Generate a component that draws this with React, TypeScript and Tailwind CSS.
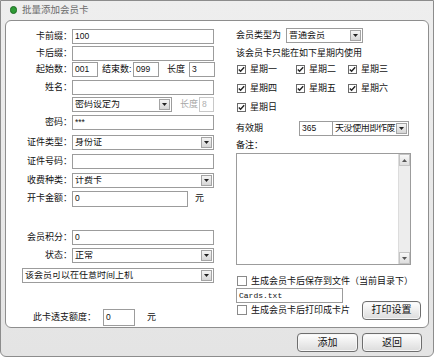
import type { ReactNode } from 'react';
import { clsx } from 'clsx';

const Arrow = ({ dir = 'down' }: { dir?: 'down' | 'up' }) => (
    <svg width="5" height="3" viewBox="0 0 5 3">
        {dir === 'down' ? <path d="M0 0H5L2.5 3Z" fill="#222" /> : <path d="M0 3H5L2.5 0Z" fill="#555" />}
    </svg>
);

const Input = ({ className, value, disabled, mono }: { className: string; value?: string; disabled?: boolean; mono?: boolean }) => (
    <div
        className={clsx(
            'h-[15px] bg-white border flex items-center pl-[2px] shrink-0 text-[8.5px] leading-none',
            disabled ? 'border-[#c8c8c8] text-[#b0b0b0]' : 'border-[#9c9c9c] text-[#111]',
            mono && "[font-family:'Liberation_Mono',monospace] text-[8px]",
            className
        )}
    >
        {value}
    </div>
);

const Select = ({ className, value, tight }: { className: string; value: string; tight?: boolean }) => (
    <div className={clsx('h-[15px] bg-white border border-[#9c9c9c] flex items-center shrink-0 overflow-hidden', className)}>
        <span className={clsx('pl-[2px] flex-1 whitespace-nowrap overflow-hidden', tight && 'tracking-[-0.4px] pl-[1px]')}>{value}</span>
        <div className="w-[11px] h-[11px] mr-[1px] shrink-0 border border-[#a4a4a4] bg-gradient-to-b from-[#f4f4f4] to-[#d6d6d6] flex items-center justify-center">
            <Arrow />
        </div>
    </div>
);

const Check = ({ label, className }: { label: string; className?: string }) => (
    <div className={clsx('flex items-center h-[12px]', className)}>
        <div className="w-[9px] h-[9px] border border-[#6a6a6a] bg-white flex items-center justify-center shrink-0">
            <svg width="7" height="7" viewBox="0 0 7 7">
                <path d="M0.8 3.4L2.6 5.3L6.2 1.2" stroke="#222" strokeWidth="1.4" fill="none" />
            </svg>
        </div>
        <span className="ml-[4px] whitespace-nowrap">{label}</span>
    </div>
);

const Box = ({ label, className }: { label: string; className?: string }) => (
    <div className={clsx('flex items-center h-[12px]', className)}>
        <div className="w-[10px] h-[10px] border border-[#8a8a8a] bg-white shrink-0" />
        <span className="ml-[4px] whitespace-nowrap">{label}</span>
    </div>
);

const Row = ({ label, mt, children }: { label?: string; mt: string; children: ReactNode }) => (
    <div className={clsx('flex items-center h-[15px]', mt)}>
        <div className="w-[66px] shrink-0 text-right whitespace-nowrap">{label}</div>
        {children}
    </div>
);

const Button = ({ label, className }: { label: string; className: string }) => (
    <div
        className={clsx(
            'h-[19px] rounded-[4px] border border-[#6e6e6e] bg-gradient-to-b from-[#ffffff] to-[#dcdcdc] flex items-center justify-center text-[10px] shadow-[inset_0_0_0_1px_#f6f6f6]',
            className
        )}
    >
        {label}
    </div>
);

export default function App() {
    return (
        <div className="w-[434px] h-[360px] bg-white overflow-hidden [font-family:'Liberation_Sans','Noto_Sans_CJK_SC',sans-serif] text-[9px] text-[#111] leading-none">
            <div className="h-[357px] border border-[#8c8c8c] rounded-b-[6px] bg-gradient-to-b from-[#eeeeee] to-[#e4e4e4] flex flex-col">
                {/* title */}
                <div className="h-[18px] flex items-center pl-[9px] shrink-0">
                    <div className="w-[7px] h-[8px] rounded-full bg-[#2e9b36] border border-[#1d6b22]" />
                    <span className="ml-[5px] text-[9.5px] text-[#6b6b6b]">批量添加会员卡</span>
                </div>

                <div className="ml-[4px] mt-[1px] w-[424px] h-[308px] rounded-[6px] border border-[#8e8e8e] bg-white flex shrink-0">
                    {/* left */}
                    <div className="w-[216px] flex flex-col shrink-0">
                        <Row label="卡前缀：" mt="mt-[8px]">
                            <Input className="w-[142px]" value="100" />
                        </Row>
                        <Row label="卡后缀：" mt="mt-[2px]">
                            <Input className="w-[142px]" />
                        </Row>
                        <Row label="起始数：" mt="mt-[1px]">
                            <Input className="w-[26px]" value="001" />
                            <span className="ml-[4px] w-[31px] whitespace-nowrap">结束数:</span>
                            <Input className="w-[26px]" value="099" />
                            <span className="ml-[8px] w-[22px]">长度</span>
                            <Input className="w-[26px]" value="3" />
                        </Row>
                        <Row label="姓名：" mt="mt-[3px]">
                            <Input className="w-[142px]" />
                        </Row>
                        <Row mt="mt-[2px]">
                            <Select className="w-[100px]" value="密码设定为" />
                            <span className="ml-[8px] w-[19px] text-[#a8a8a8]">长度</span>
                            <Input className="w-[15px]" value="8" disabled />
                        </Row>
                        <Row label="密码：" mt="mt-[3px]">
                            <Input className="w-[142px]" value="***" />
                        </Row>
                        <Row label="证件类型：" mt="mt-[5px]">
                            <Select className="w-[142px]" value="身份证" />
                        </Row>
                        <Row label="证件号码：" mt="mt-[4px]">
                            <Input className="w-[142px]" />
                        </Row>
                        <Row label="收费种类：" mt="mt-[4px]">
                            <Select className="w-[142px]" value="计费卡" />
                        </Row>
                        <Row label="开卡金额：" mt="mt-[3px]">
                            <Input className="w-[116px] h-[16px]" value="0" />
                            <span className="ml-[7px]">元</span>
                        </Row>
                        <Row label="会员积分：" mt="mt-[24px]">
                            <Input className="w-[142px]" value="0" />
                        </Row>
                        <Row label="状态：" mt="mt-[3px]">
                            <Select className="w-[142px]" value="正常" />
                        </Row>
                        <div className="flex items-center h-[15px] mt-[5px] pl-[16px]">
                            <Select className="w-[192px]" value="该会员可以在任意时间上机" />
                        </div>
                        <div className="flex items-center h-[16px] mt-[26px] pl-[27px]">
                            <span className="w-[70px] whitespace-nowrap">此卡透支额度：</span>
                            <Input className="w-[32px] h-[17px]" value="0" />
                            <span className="ml-[12px]">元</span>
                        </div>
                    </div>

                    {/* right */}
                    <div className="ml-[14px] w-[185px] flex flex-col shrink-0">
                        <div className="flex items-center h-[15px] mt-[7px]">
                            <span className="w-[50px] whitespace-nowrap">会员类型为</span>
                            <Select className="w-[77px]" value="普通会员" />
                        </div>
                        <div className="h-[12px] mt-[4px] flex items-center whitespace-nowrap">该会员卡只能在如下星期内使用</div>
                        <div className="flex mt-[4px]">
                            <Check className="w-[60px] pl-[1px]" label="星期一" />
                            <Check className="w-[52px]" label="星期二" />
                            <Check label="星期三" />
                        </div>
                        <div className="flex mt-[7px]">
                            <Check className="w-[60px] pl-[1px]" label="星期四" />
                            <Check className="w-[52px]" label="星期五" />
                            <Check label="星期六" />
                        </div>
                        <div className="flex mt-[7px]">
                            <Check className="pl-[1px]" label="星期日" />
                        </div>
                        <div className="flex items-center h-[15px] mt-[8px]">
                            <span className="w-[63px]">有效期</span>
                            <Input className="w-[34px]" value="365" />
                            <Select className="w-[77px] -ml-[1px]" value="天没使用即作废" tight />
                        </div>
                        <div className="h-[12px] mt-[3px] flex items-center">备注：</div>
                        <div className="mt-[2px] w-[175px] h-[112px] border border-[#9c9c9c] bg-white flex justify-end">
                            <div className="w-[12px] h-full bg-[#ededed] border-l border-[#dcdcdc] flex flex-col justify-between">
                                <div className="h-[12px] border border-[#c4c4c4] bg-gradient-to-b from-[#f8f8f8] to-[#dedede] flex items-center justify-center">
                                    <Arrow dir="up" />
                                </div>
                                <div className="h-[12px] border border-[#c4c4c4] bg-gradient-to-b from-[#f8f8f8] to-[#dedede] flex items-center justify-center">
                                    <svg width="5" height="3" viewBox="0 0 5 3">
                                        <path d="M0 0H5L2.5 3Z" fill="#555" />
                                    </svg>
                                </div>
                            </div>
                        </div>
                        <Box className="mt-[10px] pl-[1px]" label="生成会员卡后保存到文件（当前目录下）" />
                        <Input className="w-[107px] h-[14px] mt-[1px]" value="Cards.txt" mono />
                        <div className="flex items-center h-[18px] -mt-[2px]">
                            <Box className="pl-[1px]" label="生成会员卡后打印成卡片" />
                            <Button className="ml-auto w-[59px]" label="打印设置" />
                        </div>
                    </div>
                </div>

                <div className="flex justify-end gap-[4px] pr-[11px] mt-[5px]">
                    <Button className="w-[61px]" label="添加" />
                    <Button className="w-[60px]" label="返回" />
                </div>
            </div>
        </div>
    );
}
